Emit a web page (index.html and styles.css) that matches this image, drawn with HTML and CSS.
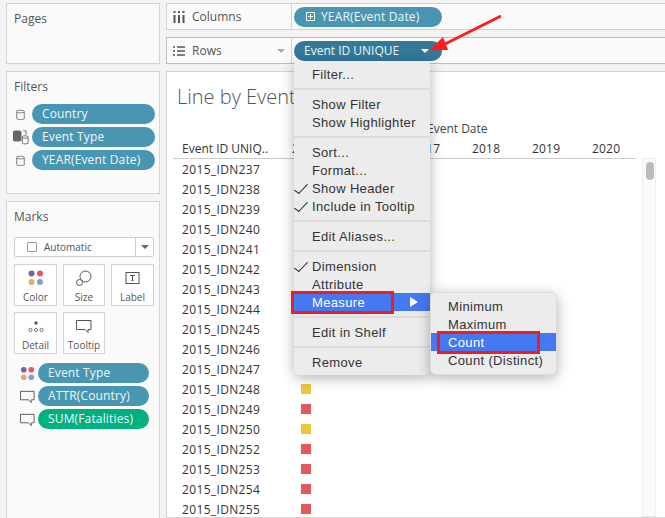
FILE: index.html
```html
<!DOCTYPE html>
<html lang="en">
<head>
    <meta charset="UTF-8">
    <title>Line by Event ID</title>
    <link rel="stylesheet" href="styles.css">
</head>
<body>
    <div class="workspace">
        <!-- Left side cards -->
        <aside class="side">
            <section class="card pages-card">
                <h3>Pages</h3>
            </section>

            <section class="card filters-card">
                <h3>Filters</h3>
                <div class="pill-list">
                    <div class="pill-row">
                        <svg class="row-icon" viewBox="0 0 18 18"><path d="M5 5.500v8c0 1 8 1 8 0v-8c0-1.300-8-1.300-8 0zm0 1c0 1 8 1 8 0" fill="none" stroke="#777" stroke-width="1"/></svg>
                        <span class="pill">Country</span>
                    </div>
                    <div class="pill-row">
                        <svg class="row-icon" viewBox="0 0 18 18"><path d="M1 3v9c0 1.800 9 1.800 9 0V3C10 1.200 1 1.200 1 3z" fill="#666"/><path d="M11 8v7c0 1 6 1 6 0V8c0-1-6-1-6 0zm0 1c0 1 6 1 6 0" fill="#fff" stroke="#666"/><path d="M12 2h3v3l-1.500 1" fill="none" stroke="#666"/></svg>
                        <span class="pill">Event Type</span>
                    </div>
                    <div class="pill-row">
                        <svg class="row-icon" viewBox="0 0 18 18"><path d="M5 5.500v8c0 1 8 1 8 0v-8c0-1.300-8-1.300-8 0zm0 1c0 1 8 1 8 0" fill="none" stroke="#777" stroke-width="1"/></svg>
                        <span class="pill">YEAR(Event Date)</span>
                    </div>
                </div>
            </section>

            <section class="card marks-card">
                <h3>Marks</h3>
                <div class="mark-select">
                    <span class="mark-box"></span>
                    <span class="mark-name">Automatic</span>
                    <span class="mark-drop"><i class="caret"></i></span>
                </div>
                <div class="mark-grid">
                    <div class="mark-btn">
                        <svg viewBox="0 0 16 16" width="16" height="16"><circle cx="3.500" cy="3.500" r="3" fill="#7b6294"/><circle cx="12" cy="3.500" r="3" fill="#e9546b"/><circle cx="3.500" cy="12" r="3" fill="#f0a46c"/><circle cx="12" cy="12" r="3" fill="#7ba1cc"/></svg>
                        <span>Color</span>
                    </div>
                    <div class="mark-btn">
                        <svg viewBox="0 0 16 16" width="16" height="16"><circle cx="9.500" cy="6.500" r="5.500" fill="none" stroke="#555"/><circle cx="3.500" cy="12.500" r="3" fill="#fff" stroke="#555"/></svg>
                        <span>Size</span>
                    </div>
                    <div class="mark-btn">
                        <svg viewBox="0 0 16 16" width="16" height="16"><rect x="1" y="2.500" width="13" height="11" fill="none" stroke="#555"/><path d="M5 5.500h5M7.500 5.500v5M6.500 10.500h2" fill="none" stroke="#555"/></svg>
                        <span>Label</span>
                    </div>
                    <div class="mark-btn">
                        <svg viewBox="0 0 16 16" width="16" height="16"><circle cx="8" cy="5" r="1.700" fill="#555"/><circle cx="2.500" cy="12" r="1.600" fill="none" stroke="#555" stroke-width=".8"/><circle cx="8" cy="12" r="1.600" fill="none" stroke="#555" stroke-width=".8"/><circle cx="13.500" cy="12" r="1.600" fill="none" stroke="#555" stroke-width=".8"/></svg>
                        <span>Detail</span>
                    </div>
                    <div class="mark-btn">
                        <svg viewBox="0 0 16 16" width="16" height="16"><path d="M.5 2.500h14.500v9h-3v3l-3-3H.5z" fill="none" stroke="#555"/></svg>
                        <span>Tooltip</span>
                    </div>
                </div>
                <div class="pill-list marks-pills">
                    <div class="pill-row">
                        <svg class="row-icon" viewBox="0 0 16 16"><circle cx="4" cy="4" r="3" fill="#7b6294"/><circle cx="12" cy="4" r="3" fill="#e9546b"/><circle cx="4" cy="12" r="3" fill="#f0a46c"/><circle cx="12" cy="12" r="3" fill="#7ba1cc"/></svg>
                        <span class="pill">Event Type</span>
                    </div>
                    <div class="pill-row">
                        <svg class="row-icon" viewBox="0 0 16 16"><path d="M.5 2.500h14.500v9h-3v3l-3-3H.5z" fill="none" stroke="#555"/></svg>
                        <span class="pill">ATTR(Country)</span>
                    </div>
                    <div class="pill-row">
                        <svg class="row-icon" viewBox="0 0 16 16"><path d="M.5 2.500h14.500v9h-3v3l-3-3H.5z" fill="none" stroke="#555"/></svg>
                        <span class="pill green">SUM(Fatalities)</span>
                    </div>
                </div>
            </section>
        </aside>

        <!-- Shelves and view -->
        <main class="main">
            <div class="shelf">
                <div class="shelf-label">
                    <svg class="shelf-icon" viewBox="0 0 12 12"><path d="M1.500 4v8M6 4v8M10.500 4v8" stroke="#555" stroke-width="2"/><path d="M1.500 0v2M6 0v2M10.500 0v2" stroke="#555" stroke-width="2"/></svg>
                    <span>Columns</span>
                </div>
                <div class="shelf-pills">
                    <span class="pill shelf-pill">
                        <svg class="plus" viewBox="0 0 9 9"><path d="M.5.500h8v8h-8zM4.500 2v5M2 4.500h5" fill="none" stroke="#fff"/></svg>
                        YEAR(Event Date)
                    </span>
                </div>
            </div>
            <div class="shelf">
                <div class="shelf-label">
                    <svg class="shelf-icon" viewBox="0 0 12 12"><path d="M0 2h2M4 2h8M0 6h2M4 6h8M0 10h2M4 10h8" stroke="#555" stroke-width="1.500"/></svg>
                    <span>Rows</span>
                    <i class="caret shelf-caret"></i>
                </div>
                <div class="shelf-pills">
                    <span class="pill shelf-pill active">
                        Event ID UNIQUE
                        <i class="caret white"></i>
                    </span>
                </div>
            </div>

            <section class="view">
                <h1>Line by Event ID</h1>
                <div class="axis-title">Event Date</div>
                <div class="head-row">
                    <div class="id-head">Event ID UNIQ..</div>
                    <div class="year">2015</div>
                    <div class="year">2016</div>
                    <div class="year">2017</div>
                    <div class="year">2018</div>
                    <div class="year">2019</div>
                    <div class="year">2020</div>
                </div>
                <div class="rows" id="rows"></div>
                <div class="scrollbar"><div class="thumb"></div></div>
            </section>
        </main>
    </div>

    <!-- Context menu -->
    <div class="menu">
        <div class="item first">Filter...</div>
        <hr>
        <div class="item">Show Filter</div>
        <div class="item">Show Highlighter</div>
        <hr>
        <div class="item">Sort...</div>
        <div class="item">Format...</div>
        <div class="item checked">Show Header</div>
        <div class="item checked">Include in Tooltip</div>
        <hr>
        <div class="item">Edit Aliases...</div>
        <hr>
        <div class="item checked">Dimension</div>
        <div class="item">Attribute</div>
        <div class="item selected">Measure<i class="sub-arrow"></i></div>
        <hr>
        <div class="item">Edit in Shelf</div>
        <hr>
        <div class="item">Remove</div>
    </div>

    <div class="menu submenu">
        <div class="item">Minimum</div>
        <div class="item">Maximum</div>
        <div class="item selected">Count</div>
        <div class="item">Count (Distinct)</div>
    </div>

    <!-- Annotations -->
    <div class="red-box measure-box"></div>
    <div class="red-box count-box"></div>
    <svg class="arrow" viewBox="0 0 80 46" width="80" height="46">
        <path d="M73 7L17 35" stroke="#f8201e" stroke-width="3" fill="none"/>
        <path d="M1 41.500L15 28L20 41z" fill="#f8201e"/>
    </svg>

    <script>
        // Build the table rows
        const rowData = [
            ['237', 'r'], ['238', 'r'], ['239', 'r'], ['240', 'r'], ['241', 'r'],
            ['242', 'r'], ['243', 'r'], ['244', 'r'], ['245', 'r'], ['246', 'r'],
            ['247', 'r'], ['248', 'y'], ['249', 'r'], ['250', 'y'], ['252', 'r'],
            ['253', 'r'], ['254', 'r'], ['255', 'r']
        ];
        document.getElementById('rows').innerHTML = rowData.map(row => `
            <div class="row">
                <div class="id-cell">2015_IDN${row[0]}</div>
                <div class="mark ${row[1] === 'y' ? 'yellow' : 'red'}"></div>
            </div>
        `).join('');
    </script>
</body>
</html>
```

FILE: styles.css
```css
* {
    box-sizing: border-box;
}

html, body {
    height: 100%;
}

body {
    margin: 0;
    background-color: #f3f3f3;
    color: #444;
    font-family: "Open Sans", "Liberation Sans", sans-serif;
    font-size: 12px;
    overflow: hidden;
}

.workspace {
    display: flex;
    gap: 6px;
    height: 518px;
    padding: 3px 0 0 6px;
}

/* Left side */
.side {
    display: flex;
    flex-direction: column;
    gap: 7px;
    width: 154px;
    flex: none;
}

.card {
    background-color: #fafafa;
    border: 1px solid #d4d4d4;
    padding: 7px 0 0 7px;
}

.card h3 {
    margin: 0;
    font-size: 12px;
    font-weight: 400;
    line-height: 16px;
    color: #555;
}

.pages-card {
    height: 61px;
}

.filters-card {
    height: 123px;
}

.marks-card {
    flex: 1;
    margin-bottom: -4px;
}

.pill-list {
    display: flex;
    flex-direction: column;
    gap: 3px;
    margin-top: 9px;
}

.pill-row {
    display: flex;
    align-items: center;
    gap: 3px;
    margin-left: -2px;
}

.row-icon {
    width: 17px;
    height: 17px;
    flex: none;
}

.pill {
    display: flex;
    align-items: center;
    background-color: #4996b2;
    color: #eef6f9;
    height: 20px;
    border-radius: 10px;
    padding: 0 10px 1px;
    width: 123px;
    font-size: 12px;
    letter-spacing: 0.15px;
    white-space: nowrap;
}

.pill.green {
    background-color: #00b180;
}

.mark-select {
    display: flex;
    align-items: center;
    width: 140px;
    height: 20px;
    margin-top: 12px;
    background-color: #fff;
    border: 1px solid #cfcfcf;
    border-radius: 2px;
    font-size: 10px;
    color: #555;
}

.mark-box {
    width: 10px;
    height: 10px;
    margin-left: 12px;
    border: 1px solid #999;
    border-radius: 1px;
}

.mark-name {
    flex: 1;
    margin-left: 7px;
}

.mark-drop {
    display: flex;
    align-items: center;
    justify-content: center;
    width: 18px;
    height: 100%;
    border-left: 1px solid #cfcfcf;
}

.caret {
    display: block;
    width: 0;
    height: 0;
    border-left: 4px solid transparent;
    border-right: 4px solid transparent;
    border-top: 4px solid #666;
}

.mark-grid {
    display: grid;
    grid-template-columns: 43px 42px 43px;
    grid-auto-rows: 42px;
    gap: 6px;
    margin-top: 7px;
}

.mark-btn {
    display: flex;
    flex-direction: column;
    align-items: center;
    justify-content: flex-end;
    gap: 4px;
    padding-bottom: 1px;
    background-color: #fff;
    border: 1px solid #d4d4d4;
    font-size: 10px;
    color: #555;
}

.marks-pills {
    margin-top: 9px;
    padding-left: 8px;
}

.marks-pills .row-icon {
    width: 15px;
    height: 15px;
}

.marks-pills .pill {
    width: 111px;
}

/* Shelves */
.main {
    flex: 1;
    display: flex;
    flex-direction: column;
    gap: 7px;
    min-width: 0;
}

.shelf {
    display: flex;
    height: 27px;
    background-color: #fafafa;
    border: 1px solid #d4d4d4;
    border-right: 0;
    flex: none;
}

.shelf + .shelf {
    border-color: #bdbdbd;
}

.shelf-label {
    display: flex;
    align-items: center;
    width: 125px;
    padding: 0 6px;
    border-right: 1px solid #d4d4d4;
    color: #555;
    flex: none;
}

.shelf-label span {
    flex: 1;
    margin-left: 7px;
}

.shelf-icon {
    width: 12px;
    height: 12px;
}

.shelf-caret {
    border-top-color: #aaa;
}

.shelf-pills {
    padding: 3px 0 0 2px;
}

.shelf-pill {
    width: 148px;
    font-size: 12px;
}

.shelf-pill.active {
    background-color: #32799a;
    justify-content: space-between;
    padding-right: 13px;
    letter-spacing: 0;
}

.caret.white {
    border-top-color: #fff;
}

.plus {
    width: 9px;
    height: 9px;
    margin: 0 6px 0 2px;
}

/* View */
.view {
    position: relative;
    flex: 1;
    background-color: #fff;
    border: 1px solid #d4d4d4;
    border-right: 0;
    padding: 12px 0 0 10px;
    overflow: hidden;
}

.view h1 {
    margin: 0;
    font-size: 20px;
    font-weight: 300;
    line-height: 26px;
    color: #555;
}

.axis-title {
    margin: 9px 0 0 250px;
    line-height: 20px;
    color: #444;
}

.head-row {
    display: flex;
    align-items: center;
    width: 463px;
    height: 20px;
    border-bottom: 1px solid #ccc;
    margin-left: -4px;
    padding-left: 9px;
}

.id-head {
    width: 110px;
    flex: none;
    color: #333;
}

.year {
    width: 60px;
    flex: none;
    letter-spacing: 0.2px;
    color: #333;
}

.row {
    display: flex;
    align-items: center;
    height: 20px;
}

.id-cell {
    width: 124px;
    padding-left: 5px;
    letter-spacing: 0.35px;
    color: #333;
}

.mark {
    width: 10px;
    height: 10px;
}

.mark.red {
    background-color: #e4575b;
}

.mark.yellow {
    background-color: #edc53f;
}

.scrollbar {
    position: absolute;
    top: 86px;
    left: 475px;
    bottom: 0;
    width: 14px;
    background-color: #fafafa;
    border: 1px solid #eee;
    padding: 3px 2px 3px 3px;
}

.thumb {
    width: 8px;
    height: 18px;
    background-color: #bbb;
    border-radius: 4px;
}

/* Menus */
.menu {
    position: absolute;
    top: 61px;
    left: 294px;
    width: 136px;
    padding-bottom: 4px;
    background-color: #ececec;
    border-radius: 4px 4px 6px 6px;
    box-shadow: 0 3px 14px rgba(0, 0, 0, 0.3);
    font-family: "Liberation Sans", sans-serif;
    font-size: 13px;
    letter-spacing: 0.35px;
    color: #333;
}

.menu hr {
    margin: 5px 0;
    border: 0;
    height: 2px;
    background-color: #dcdcdc;
}

.item {
    position: relative;
    height: 18px;
    line-height: 20px;
    padding-left: 18px;
    white-space: nowrap;
}

.item.first {
    height: 22px;
    line-height: 27px;
}

.item.checked::before {
    content: "";
    position: absolute;
    left: 4px;
    top: 2px;
    width: 5px;
    height: 12px;
    border-right: 1px solid #222;
    border-bottom: 1px solid #222;
    transform: rotate(36deg) skewX(-8deg);
}

.item.selected {
    background-color: #4479f2;
    color: #fff;
}

.sub-arrow {
    position: absolute;
    right: 12px;
    top: 4px;
    width: 0;
    height: 0;
    border-top: 5px solid transparent;
    border-bottom: 5px solid transparent;
    border-left: 8px solid #fff;
}

.submenu {
    top: 292px;
    left: 430px;
    width: 127px;
    height: 83px;
    padding: 4px 0;
    border-radius: 6px;
    border: 1px solid #dcdcdc;
}

.submenu .item {
    padding-left: 17px;
}

.red-box {
    position: absolute;
    border: 3px solid #ef1c20;
}

.measure-box {
    top: 291px;
    left: 291px;
    width: 103px;
    height: 23px;
}

.count-box {
    top: 331px;
    left: 437px;
    width: 103px;
    height: 23px;
}

.arrow {
    position: absolute;
    top: 9px;
    left: 428px;
}
```
